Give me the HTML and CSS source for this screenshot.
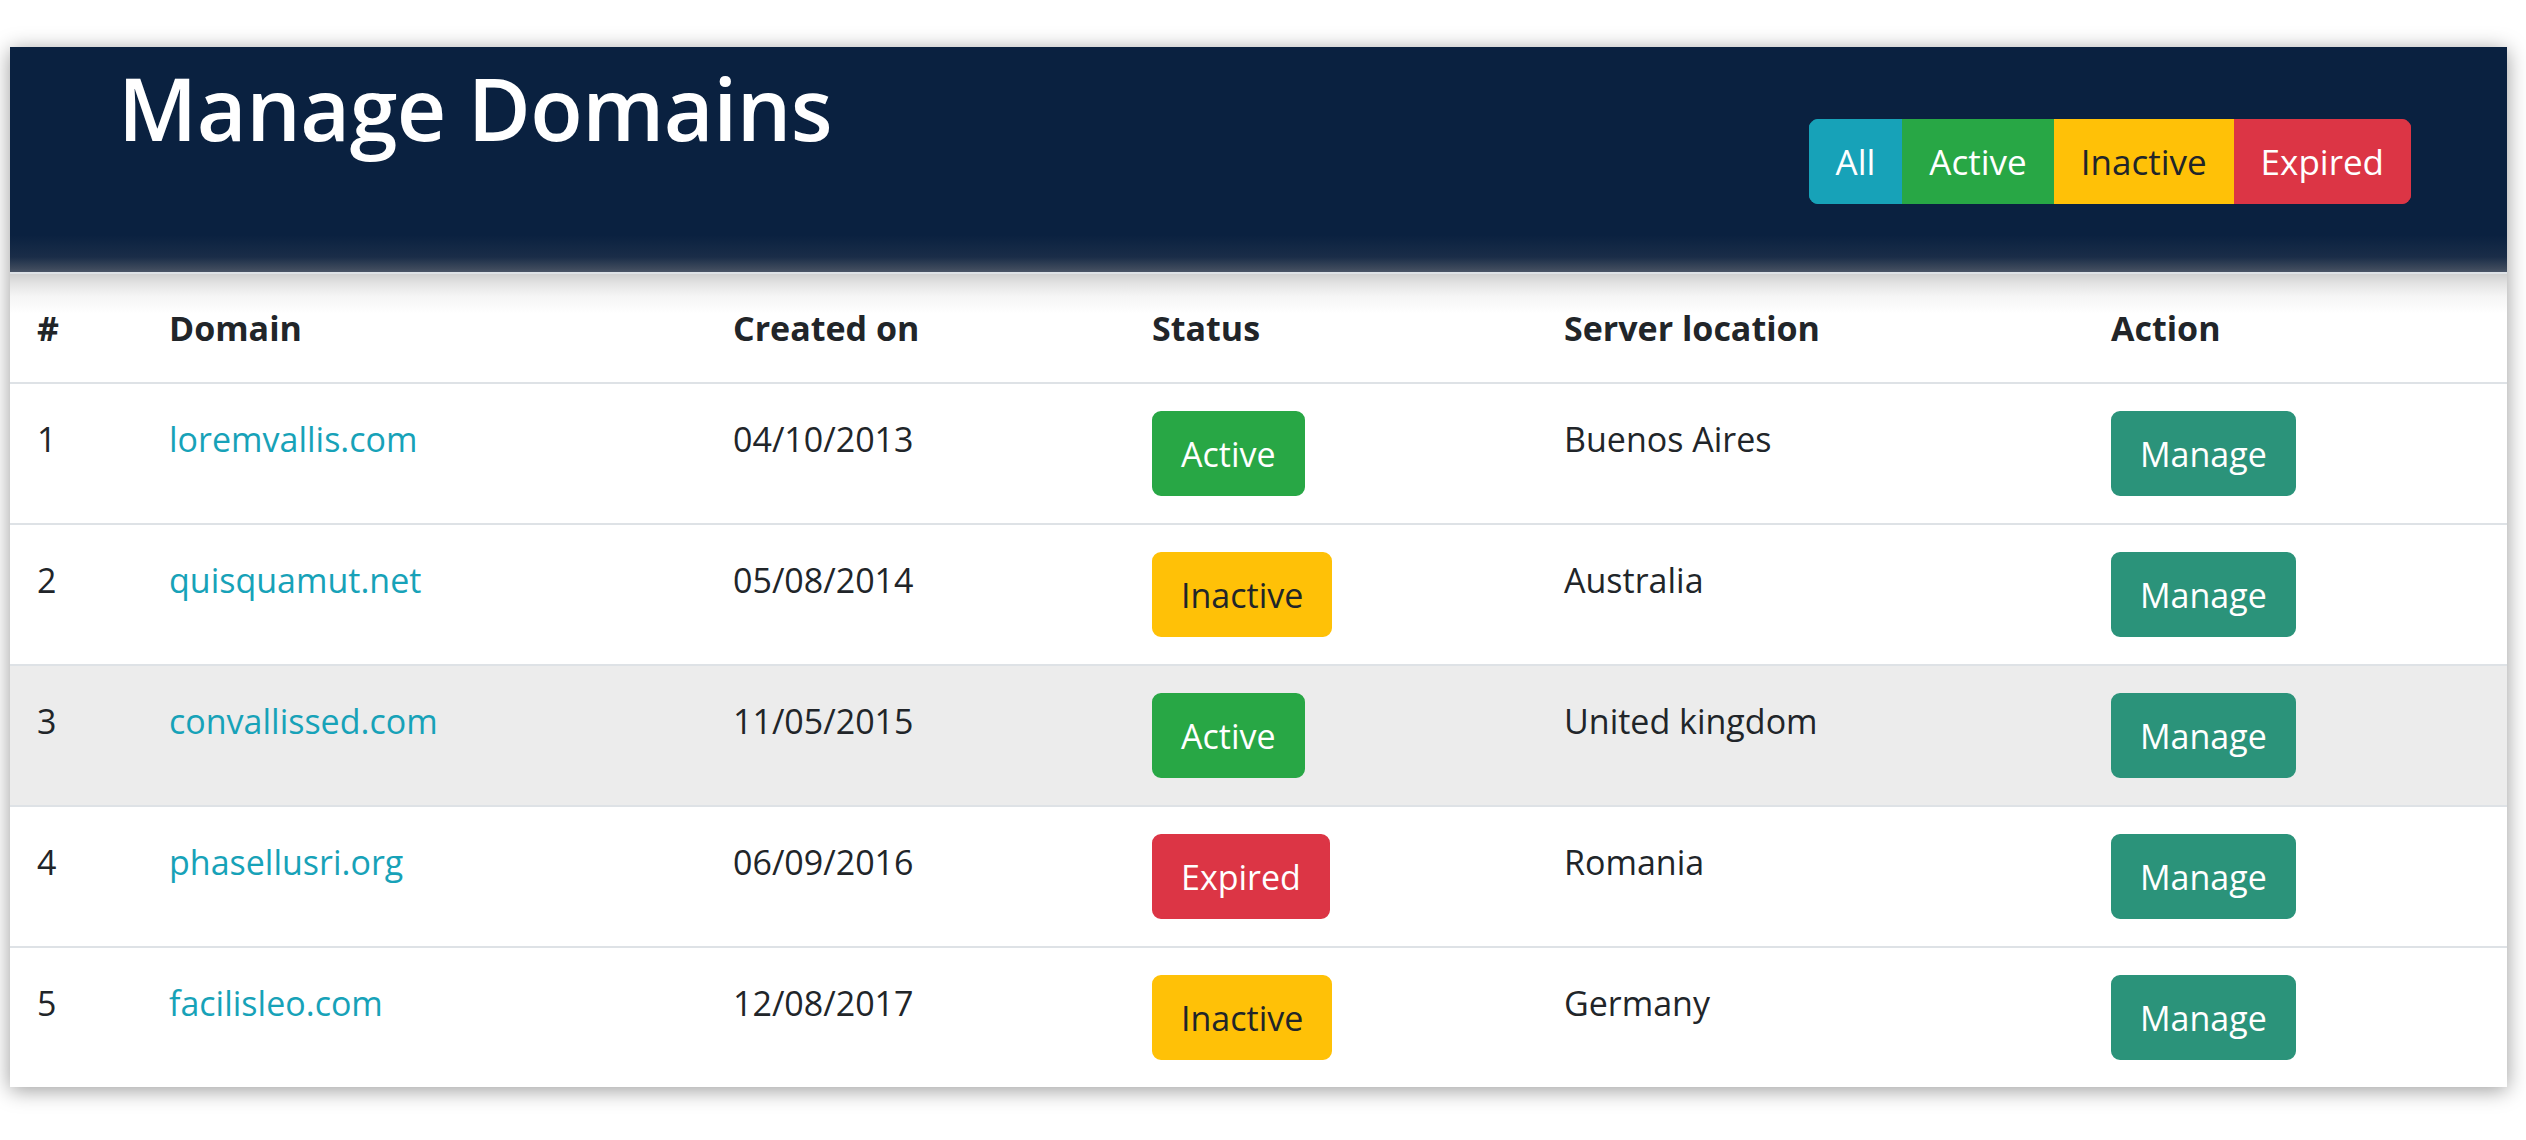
FILE: index.html
```html
<!DOCTYPE html>
<html lang="en">
<head>
<meta charset="utf-8">
<title>Manage Domains</title>
<link rel="stylesheet" href="styles.css">
</head>
<body>
<div class="page">
  <div class="card">
    <div class="card-header">
      <h1 class="title">Manage Domains</h1>
      <div class="btn-group">
        <button class="btn btn-info">All</button>
        <button class="btn btn-success">Active</button>
        <button class="btn btn-warning">Inactive</button>
        <button class="btn btn-danger">Expired</button>
      </div>
    </div>
    <table class="table">
      <colgroup>
        <col class="c1"><col class="c2"><col class="c3"><col class="c4"><col class="c5"><col class="c6">
      </colgroup>
      <thead>
        <tr><th>#</th><th>Domain</th><th>Created on</th><th>Status</th><th>Server location</th><th>Action</th></tr>
      </thead>
      <tbody>
        <tr>
          <td>1</td><td><a href="#">loremvallis.com</a></td><td>04/10/2013</td>
          <td><span class="btn btn-success">Active</span></td><td>Buenos Aires</td>
          <td><span class="btn btn-manage">Manage</span></td>
        </tr>
        <tr>
          <td>2</td><td><a href="#">quisquamut.net</a></td><td>05/08/2014</td>
          <td><span class="btn btn-warning">Inactive</span></td><td>Australia</td>
          <td><span class="btn btn-manage">Manage</span></td>
        </tr>
        <tr class="hover">
          <td>3</td><td><a href="#">convallissed.com</a></td><td>11/05/2015</td>
          <td><span class="btn btn-success">Active</span></td><td>United kingdom</td>
          <td><span class="btn btn-manage">Manage</span></td>
        </tr>
        <tr>
          <td>4</td><td><a href="#">phasellusri.org</a></td><td>06/09/2016</td>
          <td><span class="btn btn-danger">Expired</span></td><td>Romania</td>
          <td><span class="btn btn-manage">Manage</span></td>
        </tr>
        <tr>
          <td>5</td><td><a href="#">facilisleo.com</a></td><td>12/08/2017</td>
          <td><span class="btn btn-warning">Inactive</span></td><td>Germany</td>
          <td><span class="btn btn-manage">Manage</span></td>
        </tr>
      </tbody>
    </table>
  </div>
</div>
</body>
</html>
```
FILE: styles.css
```css
html, body {
  margin: 0;
  padding: 0;
  background: #ffffff;
}
body {
  font-family: "Open Sans", "Noto Sans", sans-serif;
  font-size: 34px;
  line-height: 54px;
  color: #212529;
}
.page {
  padding: 47px 19px 40px 10px;
}
.card {
  background: #ffffff;
  box-shadow: 0 3px 20px rgba(0, 0, 0, 0.4);
}
.card-header {
  height: 225px;
  box-sizing: border-box;
  padding: 0 96px 0 108px;
  display: flex;
  justify-content: space-between;
  align-items: flex-start;
  background: linear-gradient(to bottom, #0a2140 0, #0a2140 188px, #1a2d48 210px, #3e4a5c 222px, #4a5567 225px);
}
.title {
  margin: 9px 0 0 0;
  font-size: 86px;
  line-height: 104px;
  font-weight: 600;
  color: #ffffff;
  letter-spacing: -0.5px;
}
.btn-group {
  display: flex;
  margin-top: 72px;
  border-radius: 9px;
  overflow: hidden;
}
.btn {
  display: inline-block;
  font-family: inherit;
  font-size: 34px;
  line-height: 54px;
  padding: 13.5px 27px;
  border: 2px solid transparent;
  border-radius: 9px;
  color: #ffffff;
  cursor: pointer;
  vertical-align: baseline;
}
.btn-group .btn {
  border-radius: 0;
  font-size: 35px;
  padding: 13.5px 25px;
}
.btn-info { background: #17a2b8; border-color: #17a2b8; }
.btn-success { background: #28a745; border-color: #28a745; }
.btn-warning { background: #ffc107; border-color: #ffc107; color: #212529; }
.btn-danger { background: #dc3545; border-color: #dc3545; }
.btn-manage { background: #2b937a; border-color: #2b937a; }

.table {
  width: 100%;
  border-collapse: collapse;
  table-layout: fixed;
}
.c1 { width: 132px; }
.c2 { width: 564px; }
.c3 { width: 419px; }
.c4 { width: 412px; }
.c5 { width: 547px; }
.c6 { width: 423px; }

.table th,
.table td {
  padding: 27px;
  text-align: left;
  vertical-align: top;
  border-top: 2px solid #dee2e6;
}
.table td {
  line-height: 56px;
}
.table th {
  font-weight: 700;
  border-bottom: 2px solid #dee2e6;
  background: linear-gradient(to bottom, #d0d0d0 0, #e4e4e4 10px, #f5f5f5 22px, #ffffff 40px);
}
.table td .btn {
  line-height: 54px;
}
.table tr.hover td {
  background: #ececec;
}
.table a {
  color: #17a2b8;
  text-decoration: none;
}
```
